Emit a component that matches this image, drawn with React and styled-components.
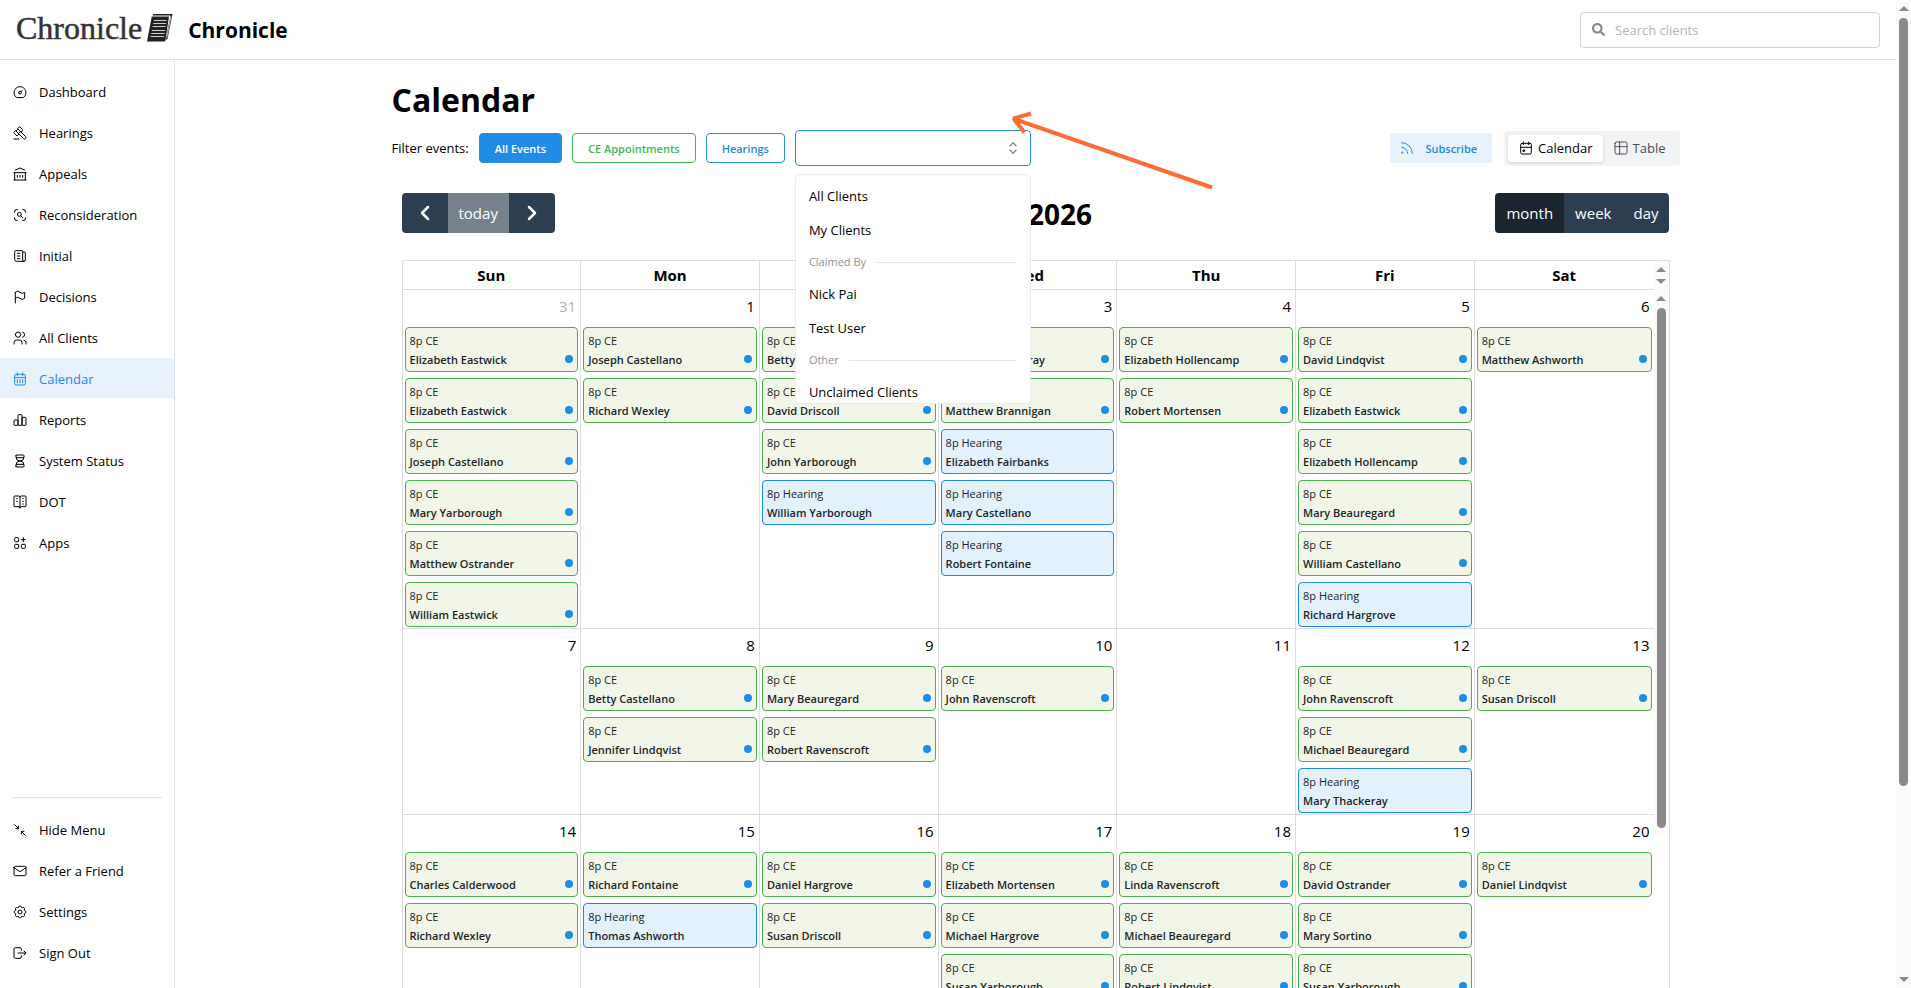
import React, { useState } from "react";
import styled, { createGlobalStyle, css } from "styled-components";
import {
  TbApps,
  TbArrowsDiagonalMinimize,
  TbBuildingBank,
  TbCalendarEvent,
  TbDashboard,
  TbFlag,
  TbGavel,
  TbHourglass,
  TbLogout,
  TbMail,
  TbNews,
  TbRss,
  TbSelector,
  TbSettings,
  TbTable,
  TbUsers,
  TbVocabulary,
  TbZoomScan,
} from "react-icons/tb";
import { FaSearch } from "react-icons/fa";
import { ChevronLeft, ChevronRight } from "lucide-react";

const BarsIcon = ({ size, strokeWidth }) => (
  <svg
    width={size}
    height={size}
    viewBox="0 0 24 24"
    fill="none"
    stroke="currentColor"
    strokeWidth={strokeWidth}
    aria-hidden="true"
  >
    <rect x="3" y="12" width="6" height="8" rx="1" />
    <rect x="9" y="4" width="6" height="16" rx="1" />
    <rect x="15" y="8" width="6" height="12" rx="1" />
  </svg>
);

const CalendarGridIcon = ({ size, strokeWidth }) => (
  <svg
    width={size}
    height={size}
    viewBox="0 0 24 24"
    fill="none"
    stroke="currentColor"
    strokeWidth={strokeWidth}
    strokeLinecap="round"
    aria-hidden="true"
  >
    <rect x="4" y="5" width="16" height="16" rx="2" />
    <path d="M8 3v4M16 3v4M4 10h16M8 13v5M12 13v5M16 13v5" />
  </svg>
);

const mainLinks = [
  { label: "Dashboard", icon: TbDashboard },
  { label: "Hearings", icon: TbGavel },
  { label: "Appeals", icon: TbBuildingBank },
  { label: "Reconsideration", icon: TbZoomScan },
  { label: "Initial", icon: TbNews },
  { label: "Decisions", icon: TbFlag },
  { label: "All Clients", icon: TbUsers },
  { label: "Calendar", icon: CalendarGridIcon, active: true },
  { label: "Reports", icon: BarsIcon },
  { label: "System Status", icon: TbHourglass },
  { label: "DOT", icon: TbVocabulary },
  { label: "Apps", icon: TbApps },
];

const footerLinks = [
  { label: "Hide Menu", icon: TbArrowsDiagonalMinimize },
  { label: "Refer a Friend", icon: TbMail },
  { label: "Settings", icon: TbSettings },
  { label: "Sign Out", icon: TbLogout },
];

const clientGroups = [
  { options: ["All Clients", "My Clients"] },
  { title: "Claimed By", options: ["Nick Pai", "Test User"] },
  { title: "Other", options: ["Unclaimed Clients"] },
];

const weekdays = ["Sun", "Mon", "Tue", "Wed", "Thu", "Fri", "Sat"];

const ce = (name) => ({ name, type: "CE" });
const hearing = (name) => ({ name, type: "Hearing" });

const weeks = [
  [
    {
      day: 31,
      other: true,
      events: [
        ce("Elizabeth Eastwick"),
        ce("Elizabeth Eastwick"),
        ce("Joseph Castellano"),
        ce("Mary Yarborough"),
        ce("Matthew Ostrander"),
        ce("William Eastwick"),
      ],
    },
    { day: 1, events: [ce("Joseph Castellano"), ce("Richard Wexley")] },
    {
      day: 2,
      events: [
        ce("Betty Fontaine"),
        ce("David Driscoll"),
        ce("John Yarborough"),
        hearing("William Yarborough"),
      ],
    },
    {
      day: 3,
      events: [
        ce("Jennifer Thackeray"),
        ce("Matthew Brannigan"),
        hearing("Elizabeth Fairbanks"),
        hearing("Mary Castellano"),
        hearing("Robert Fontaine"),
      ],
    },
    { day: 4, events: [ce("Elizabeth Hollencamp"), ce("Robert Mortensen")] },
    {
      day: 5,
      events: [
        ce("David Lindqvist"),
        ce("Elizabeth Eastwick"),
        ce("Elizabeth Hollencamp"),
        ce("Mary Beauregard"),
        ce("William Castellano"),
        hearing("Richard Hargrove"),
      ],
    },
    { day: 6, events: [ce("Matthew Ashworth")] },
  ],
  [
    { day: 7, events: [] },
    { day: 8, events: [ce("Betty Castellano"), ce("Jennifer Lindqvist")] },
    { day: 9, events: [ce("Mary Beauregard"), ce("Robert Ravenscroft")] },
    { day: 10, events: [ce("John Ravenscroft")] },
    { day: 11, events: [] },
    {
      day: 12,
      events: [
        ce("John Ravenscroft"),
        ce("Michael Beauregard"),
        hearing("Mary Thackeray"),
      ],
    },
    { day: 13, events: [ce("Susan Driscoll")] },
  ],
  [
    { day: 14, events: [ce("Charles Calderwood"), ce("Richard Wexley")] },
    { day: 15, events: [ce("Richard Fontaine"), hearing("Thomas Ashworth")] },
    { day: 16, events: [ce("Daniel Hargrove"), ce("Susan Driscoll")] },
    {
      day: 17,
      events: [
        ce("Elizabeth Mortensen"),
        ce("Michael Hargrove"),
        ce("Susan Yarborough"),
      ],
    },
    {
      day: 18,
      events: [
        ce("Linda Ravenscroft"),
        ce("Michael Beauregard"),
        ce("Robert Lindqvist"),
      ],
    },
    {
      day: 19,
      events: [ce("David Ostrander"), ce("Mary Sortino"), ce("Susan Yarborough")],
    },
    { day: 20, events: [ce("Daniel Lindqvist")] },
  ],
];

const NavLinks = ({ links }) => (
  <NavList>
    {links.map(({ label, icon: Icon, active }) => (
      <li key={label}>
        <NavLink href="#" $active={active}>
          <Icon size={16} strokeWidth={1.5} />
          {label}
        </NavLink>
      </li>
    ))}
  </NavList>
);

const LogoMark = () => (
  <svg width="26" height="28" viewBox="0 0 26 28" aria-hidden="true">
    <path d="M6 0H25.500L20.500 25L18.500 26L23.500 1.500H5.700Z" fill="#222" />
    <path d="M4.700 2.500H22L18.200 27.500H0Z" fill="#222" />
    <path
      d="M7 6.500H19.500M6.300 9.500H19M5.600 12.500H18.500M5 16.500H18M4.300 19.500H17.500M3.600 22.500H17"
      stroke="#ccc"
      strokeWidth="1"
    />
    <path d="M24 2.500L19.700 24" stroke="#fff" strokeWidth="0.700" />
  </svg>
);

const ScrollRail = ({ thumb, endArrow }) => (
  <Rail aria-hidden="true">
    <ArrowMark />
    {thumb && <Thumb $height={thumb} />}
    {endArrow && <ArrowMark $down />}
  </Rail>
);

const ClientSelect = () => {
  const [client, setClient] = useState("");

  return (
    <SelectWrap>
      <Select
        aria-label="Filter by client"
        value={client}
        onChange={(e) => setClient(e.target.value)}
      >
        <option value=""></option>
        {clientGroups.flatMap((group) =>
          group.options.map((option) => <option key={option}>{option}</option>)
        )}
      </Select>
      <TbSelector className="selector" size={18} strokeWidth={2} />
      <Menu role="listbox" aria-label="Clients">
        {clientGroups.map((group, i) => (
          <React.Fragment key={i}>
            {group.title && <MenuLabel role="presentation">{group.title}</MenuLabel>}
            {group.options.map((option) => (
              <MenuOption
                key={option}
                role="option"
                aria-selected={client === option}
                onClick={() => setClient(option)}
              >
                {option}
              </MenuOption>
            ))}
          </React.Fragment>
        ))}
      </Menu>
      <Pointer viewBox="0 0 210 84" aria-hidden="true">
        <path d="M202 77.500L4 9M21 3.500L3.500 8.500L14.500 22.500" />
      </Pointer>
    </SelectWrap>
  );
};

const Event = ({ type, name }) => (
  <EventCard href="#" $type={type}>
    <span>8p {type}</span>
    <strong>{name}</strong>
  </EventCard>
);

const App = () => {
  const [view, setView] = useState("Calendar");

  return (
    <>
      <GlobalStyle />
      <Window>
        <Page>
          <Header>
            <Logo href="#">
              Chronicle
              <LogoMark />
            </Logo>
            <h2>Chronicle</h2>
            <Search>
              <FaSearch size={13} />
              <input type="text" placeholder="Search clients" aria-label="Search clients" />
            </Search>
          </Header>
          <Body>
            <Sidebar>
              <NavLinks links={mainLinks} />
              <SidebarFooter>
                <NavLinks links={footerLinks} />
              </SidebarFooter>
            </Sidebar>
            <Main>
              <Content>
                <h1>Calendar</h1>
                <Filters>
                  <span>Filter events:</span>
                  <FilterButton $tone="filled">All Events</FilterButton>
                  <FilterButton $tone="green">CE Appointments</FilterButton>
                  <FilterButton $tone="blue">Hearings</FilterButton>
                  <ClientSelect />
                  <ViewActions>
                    <Subscribe>
                      <TbRss size={16} strokeWidth={1.5} />
                      Subscribe
                    </Subscribe>
                    <Segmented>
                      {[
                        ["Calendar", TbCalendarEvent],
                        ["Table", TbTable],
                      ].map(([label, Icon]) => (
                        <Segment key={label} $active={view === label}>
                          <input
                            type="radio"
                            name="view"
                            checked={view === label}
                            onChange={() => setView(label)}
                          />
                          <Icon size={16} strokeWidth={1.5} />
                          {label}
                        </Segment>
                      ))}
                    </Segmented>
                  </ViewActions>
                </Filters>
                <Calendar>
                  <Toolbar>
                    <ButtonGroup>
                      <ToolButton aria-label="Previous month">
                        <ChevronLeft size={24} strokeWidth={2.5} />
                      </ToolButton>
                      <ToolButton $muted>today</ToolButton>
                      <ToolButton aria-label="Next month">
                        <ChevronRight size={24} strokeWidth={2.5} />
                      </ToolButton>
                    </ButtonGroup>
                    <h2>June 2026</h2>
                    <ButtonGroup>
                      <ToolButton $active>month</ToolButton>
                      <ToolButton>week</ToolButton>
                      <ToolButton>day</ToolButton>
                    </ButtonGroup>
                  </Toolbar>
                  <Frame>
                    <MonthTable>
                      <thead>
                        <tr>
                          {weekdays.map((day) => (
                            <th key={day} scope="col">
                              {day}
                            </th>
                          ))}
                        </tr>
                      </thead>
                      <tbody>
                        {weeks.map((week, i) => (
                          <tr key={i}>
                            {week.map(({ day, other, events }) => (
                              <td key={day}>
                                <DayNumber $other={other}>{day}</DayNumber>
                                <Events>
                                  {events.map((event, j) => (
                                    <Event key={j} {...event} />
                                  ))}
                                </Events>
                              </td>
                            ))}
                          </tr>
                        ))}
                      </tbody>
                    </MonthTable>
                    <Gutter>
                      <div className="head">
                        <ScrollRail endArrow />
                      </div>
                      <ScrollRail thumb="520px" />
                    </Gutter>
                  </Frame>
                </Calendar>
              </Content>
            </Main>
          </Body>
        </Page>
        <ScrollRail thumb="calc(100vh - 220px)" endArrow />
      </Window>
    </>
  );
};

export default App;

const GlobalStyle = createGlobalStyle`
  * {
    box-sizing: border-box;
  }
  body {
    margin: 0;
    background-color: #fff;
    color: #000;
    font-family: "Open Sans", "Noto Sans", sans-serif;
    font-size: 13px;
    line-height: 22px;
  }
  h1, h2, ul {
    margin: 0;
    padding: 0;
  }
  ul {
    list-style: none;
  }
  a {
    color: inherit;
    text-decoration: none;
  }
  button, input, select {
    font-family: inherit;
  }
`;

const Window = styled.div`
  display: flex;
  height: 100vh;
  overflow: hidden;
`;

const Page = styled.div`
  flex: 1;
  min-width: 0;
  display: flex;
  flex-direction: column;
`;

const Header = styled.header`
  flex: none;
  display: flex;
  align-items: center;
  height: 60px;
  padding: 0 16px;
  border-bottom: 1px solid #dee2e6;

  h2 {
    margin-left: 15px;
    font-size: 21px;
    font-weight: 700;
  }
`;

const Logo = styled.a`
  display: flex;
  align-items: center;
  gap: 5px;
  padding-bottom: 4px;
  color: #333;
  font-family: "Liberation Serif", serif;
  font-size: 32px;
  -webkit-text-stroke: 0.5px #333;
`;

const Search = styled.label`
  display: flex;
  align-items: center;
  gap: 10px;
  width: 300px;
  height: 36px;
  margin-left: auto;
  padding: 0 11px;
  border: 1px solid #ced4da;
  border-radius: 4px;
  color: #868686;

  input {
    flex: 1;
    min-width: 0;
    padding: 0;
    border: 0;
    outline: 0;
    background: none;
    font-size: 13px;

    &::placeholder {
      color: #adb5bd;
    }
  }
`;

const Body = styled.div`
  flex: 1;
  min-height: 0;
  display: flex;
`;

const Sidebar = styled.nav`
  flex: none;
  display: flex;
  flex-direction: column;
  justify-content: space-between;
  width: 175px;
  padding: 11px 0 16px;
  border-right: 1px solid #dee2e6;
`;

const SidebarFooter = styled.div`
  &::before {
    content: "";
    display: block;
    margin: 0 12px 11px;
    border-top: 1px solid #dee2e6;
  }
`;

const NavList = styled.ul`
  display: flex;
  flex-direction: column;
  gap: 1px;
`;

const NavLink = styled.a`
  display: flex;
  align-items: center;
  gap: 11px;
  height: 40px;
  padding: 2px 12px 0;
  ${({ $active }) =>
    $active &&
    css`
      background-color: #e7f2fc;
      color: #228be6;
    `}
`;

const Main = styled.main`
  flex: 1;
  min-width: 0;
  overflow: hidden;
`;

const Content = styled.div`
  max-width: 1320px;
  margin: 0 auto;
  padding: 16px;

  h1 {
    font-size: 32px;
    line-height: 48px;
  }
`;

const Filters = styled.div`
  display: flex;
  align-items: center;
  gap: 10px;
  margin-top: 6px;
`;

const tones = {
  filled: { bg: "#228be6", border: "#228be6", text: "#fff" },
  green: { bg: "#fff", border: "#40b85a", text: "#40b85a" },
  blue: { bg: "#fff", border: "#228be6", text: "#228be6" },
};

const FilterButton = styled.button`
  height: 30px;
  padding: 0 15px;
  border: 1px solid ${({ $tone }) => tones[$tone].border};
  border-radius: 4px;
  background-color: ${({ $tone }) => tones[$tone].bg};
  color: ${({ $tone }) => tones[$tone].text};
  font-size: 11px;
  font-weight: 600;
`;

const SelectWrap = styled.div`
  position: relative;
  width: 236px;

  .selector {
    position: absolute;
    top: 9px;
    right: 9px;
    color: #868e96;
    pointer-events: none;
  }
`;

const Select = styled.select`
  appearance: none;
  display: block;
  width: 100%;
  height: 36px;
  padding: 0 12px;
  border: 1px solid #228be6;
  border-radius: 4px;
  outline: 0;
  background-color: #fff;
  font-size: 13px;
`;

const Menu = styled.ul`
  position: absolute;
  z-index: 2;
  top: 44px;
  left: 0;
  right: 0;
  height: 230px;
  && {
    padding: 4px;
  }
  overflow: hidden;
  border: 1px solid #e9ecef;
  border-radius: 4px;
  background-color: #fff;
`;

const MenuOption = styled.li`
  padding: 6px 9px;
  cursor: pointer;
`;

const MenuLabel = styled.li`
  display: flex;
  align-items: center;
  gap: 10px;
  height: 30px;
  padding: 0 9px;
  color: #909296;
  font-size: 11px;

  &::after {
    content: "";
    flex: 1;
    border-top: 1px solid #e3e6e9;
  }
`;

const Pointer = styled.svg`
  position: absolute;
  z-index: 3;
  top: -20px;
  left: 215px;
  width: 210px;
  height: 84px;
  fill: none;
  stroke: #ff6b35;
  stroke-width: 4px;
  stroke-linejoin: bevel;
  pointer-events: none;
`;

const ViewActions = styled.div`
  display: flex;
  align-items: center;
  gap: 12px;
  margin-left: auto;
`;

const Subscribe = styled.button`
  display: flex;
  align-items: center;
  gap: 10px;
  height: 30px;
  padding: 0 15px 0 9px;
  border: 0;
  border-radius: 4px;
  background-color: #e7f2fc;
  color: #228be6;
  font-size: 11px;
  font-weight: 600;
`;

const Segmented = styled.div`
  display: flex;
  padding: 4px;
  border-radius: 4px;
  background-color: #f1f3f5;
`;

const Segment = styled.label`
  display: flex;
  align-items: center;
  gap: 4px;
  height: 27px;
  padding: 0 10px;
  border-radius: 4px;
  color: #495057;
  cursor: pointer;
  ${({ $active }) =>
    $active &&
    css`
      background-color: #fff;
      color: #000;
      box-shadow: 0 1px 3px rgba(0, 0, 0, 0.15);
    `}

  input {
    position: absolute;
    opacity: 0;
  }
`;

const Calendar = styled.section`
  padding: 27px 10px 0;
`;

const Toolbar = styled.div`
  display: flex;
  align-items: center;
  justify-content: space-between;
  margin-bottom: 27px;

  h2 {
    padding-top: 2px;
    font-size: 28px;
    line-height: 34px;
  }
`;

const ButtonGroup = styled.div`
  display: flex;
  overflow: hidden;
  border-radius: 4px;
`;

const ToolButton = styled.button`
  display: flex;
  align-items: center;
  height: 40px;
  padding: 0 11px;
  border: 0;
  background-color: #2c3e50;
  color: #fff;
  font-size: 15px;
  ${({ $active }) => $active && "background-color: #1a252f;"}
  ${({ $muted }) => $muted && "background-color: #76818c;"}
`;

const Frame = styled.div`
  display: flex;
  border: 1px solid #ddd;
`;

const MonthTable = styled.table`
  flex: 1;
  width: 100%;
  min-width: 0;
  table-layout: fixed;
  border-collapse: separate;
  border-spacing: 0;

  th,
  td {
    padding: 0;
    border-right: 1px solid #ddd;
    vertical-align: top;

    &:last-child {
      border-right: 0;
    }
  }
  th {
    height: 28px;
    font-size: 15px;
    line-height: 28px;
  }
  td {
    border-top: 1px solid #ddd;
  }
`;

const DayNumber = styled.div`
  height: 37px;
  padding: 5px 4px 0;
  text-align: right;
  font-size: 15px;
  ${({ $other }) => $other && "color: #b3b3b3;"}
`;

const Events = styled.div`
  display: flex;
  flex-direction: column;
  gap: 6px;
  padding: 0 2px 1px;
`;

const eventTones = {
  CE: { bg: "#f1f6e8", border: "#4caf50" },
  Hearing: { bg: "#e3f1fd", border: "#1e88e5" },
};

const EventCard = styled.a`
  position: relative;
  display: flex;
  flex-direction: column;
  height: 45px;
  padding: 3px 4px 0;
  border: 1px solid ${({ $type }) => eventTones[$type].border};
  border-radius: 4px;
  background-color: ${({ $type }) => eventTones[$type].bg};
  color: #212529;
  font-size: 11px;
  line-height: 19px;

  strong {
    font-weight: 600;
  }

  /* unread marker */
  &::after {
    content: "";
    display: ${({ $type }) => ($type === "CE" ? "block" : "none")};
    position: absolute;
    right: 4px;
    bottom: 8px;
    width: 8px;
    height: 8px;
    border-radius: 50%;
    background-color: #228be6;
  }
`;

const Gutter = styled.div`
  flex: none;
  display: flex;
  flex-direction: column;
  width: 15px;

  .head {
    display: flex;
    height: 29px;
  }
`;

const Rail = styled.div`
  flex: none;
  display: flex;
  flex-direction: column;
  align-items: center;
  gap: 7px;
  width: 15px;
  padding: 6px 0;
  background-color: #fbfbfb;
`;

const ArrowMark = styled.span`
  flex: none;
  border: 5px solid transparent;
  border-top-width: 0;
  border-bottom: 5px solid #8a8a8a;
  ${({ $down }) =>
    $down &&
    css`
      margin-top: auto;
      transform: rotate(180deg);
    `}
`;

const Thumb = styled.span`
  flex: none;
  width: 9px;
  height: ${({ $height }) => $height};
  border-radius: 5px;
  background-color: #8a8a8a;
`;
